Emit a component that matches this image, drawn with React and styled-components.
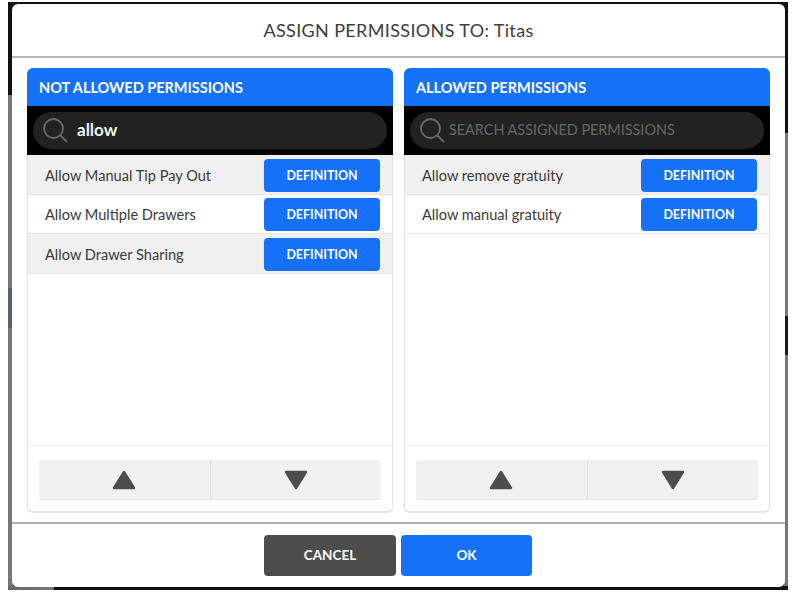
import React from 'react';
import styled, { createGlobalStyle } from 'styled-components';

const Global = createGlobalStyle`
  html, body { margin: 0; padding: 0; background: #fff; }
  body { font-family: "Lato", "Liberation Sans", sans-serif; }
  * { box-sizing: border-box; }
`;

const notAllowed = ['Allow Manual Tip Pay Out', 'Allow Multiple Drawers', 'Allow Drawer Sharing'];
const allowed = ['Allow remove gratuity', 'Allow manual gratuity'];

const SearchIcon = () => (
  <svg width="26" height="28" viewBox="0 0 26 28" fill="none" stroke="#6a6a6a" strokeWidth="1.8" strokeLinecap="round">
    <circle cx="10.5" cy="11.5" r="9.5" />
    <path d="M17.5 18.5 L23.5 24.5" />
  </svg>
);

const Arrow = ({ down }) => (
  <svg width="24" height="20" viewBox="0 0 24 20">
    <path
      d={down ? 'M2 2 H22 L12 18 Z' : 'M12 2 L22 18 H2 Z'}
      fill="#4d4d4d"
      stroke="#4d4d4d"
      strokeWidth="2.4"
      strokeLinejoin="round"
    />
  </svg>
);

const Panel = ({ title, query, placeholder, items }) => (
  <Card>
    <CardTitle>{title}</CardTitle>
    <SearchBar>
      <SearchPill>
        <SearchIcon />
        <SearchInput $filled={!!query} $indent={query ? 8 : 3}>{query || placeholder}</SearchInput>
      </SearchPill>
    </SearchBar>
    <CardBody>
      <List>
        {items.map((item) => (
          <Row key={item}>
            <RowLabel>{item}</RowLabel>
            <DefinitionButton>DEFINITION</DefinitionButton>
          </Row>
        ))}
      </List>
      <Pager>
        <PagerButton><Arrow /></PagerButton>
        <PagerButton><Arrow down /></PagerButton>
      </Pager>
    </CardBody>
  </Card>
);

const App = () => (
  <>
    <Global />
    <Backdrop>
      <Modal>
        <Header>ASSIGN PERMISSIONS TO: Titas</Header>
        <Body>
          <Panel title="NOT ALLOWED PERMISSIONS" query="allow" items={notAllowed} />
          <Panel title="ALLOWED PERMISSIONS" placeholder="SEARCH ASSIGNED PERMISSIONS" items={allowed} />
        </Body>
        <Footer>
          <FooterButton $dark>CANCEL</FooterButton>
          <FooterButton>OK</FooterButton>
        </Footer>
      </Modal>
    </Backdrop>
  </>
);

export default App;

const Backdrop = styled.div`
  width: 780px;
  height: 588px;
  margin: 2px 0 0 8px;
  padding: 2px 3px 3px 4px;
  background:
    linear-gradient(to right, #666 0, #777 46px, #111 46px) bottom left / 100% 4px no-repeat,
    linear-gradient(to bottom, #111 0, #111 131px, #777 131px, #777 314px, #1c1c1c 314px, #1c1c1c 353px, #777 353px) top right / 4px 100% no-repeat,
    linear-gradient(to bottom, #111 0, #111 93px, #777 93px, #777 286px, #5a6272 286px, #5a6272 326px, #777 326px) top left / 5px 100% no-repeat,
    #111;
`;

const Modal = styled.div`
  width: 773px;
  height: 583px;
  display: flex;
  flex-direction: column;
  background: #fff;
  border-radius: 6px;
`;

const Header = styled.div`
  height: 54px;
  flex: none;
  display: flex;
  align-items: center;
  justify-content: center;
  padding-bottom: 1px;
  border-bottom: 2px solid #b8b8b8;
  font-size: 18px;
  letter-spacing: 0.36px;
  color: #3d3d3d;
`;

const Body = styled.div`
  flex: 1;
  min-height: 0;
  display: flex;
  gap: 11px;
  padding: 10px 15px 9px;
`;

const Card = styled.section`
  flex: 1;
  min-width: 0;
  display: flex;
  flex-direction: column;
`;

const CardTitle = styled.div`
  height: 38px;
  flex: none;
  display: flex;
  align-items: center;
  padding-left: 12px;
  border-radius: 6px 6px 0 0;
  background: #1471f8;
  color: #fff;
  font-size: 14.5px;
  font-weight: 700;
`;

const SearchBar = styled.div`
  height: 49px;
  flex: none;
  padding: 6px;
  background: #000;
`;

const SearchPill = styled.div`
  height: 37px;
  display: flex;
  align-items: center;
  padding-left: 10px;
  border-radius: 19px;
  background: #222;
`;

const SearchInput = styled.span`
  margin-left: ${(p) => p.$indent}px;
  margin-top: -2px;
  font-size: ${(p) => (p.$filled ? 17 : 14.4)}px;
  font-weight: ${(p) => (p.$filled ? 700 : 400)};
  color: ${(p) => (p.$filled ? '#f2f2f2' : '#666')};
`;

const CardBody = styled.div`
  flex: 1;
  min-height: 0;
  display: flex;
  flex-direction: column;
  border: 1px solid #e2e2e2;
  border-top: none;
  border-bottom-width: 2px;
  border-radius: 0 0 6px 6px;
`;

const List = styled.div`
  flex: 1;
  min-height: 0;
  border-bottom: 1px solid #ececec;
`;

const Row = styled.div`
  height: 39.5px;
  display: flex;
  align-items: center;
  justify-content: space-between;
  padding: 2px 12px 0 17px;
  border-bottom: 1px solid #e6e6e6;
  &:nth-child(odd) { background: #f0f0f0; }
`;

const RowLabel = styled.span`
  font-size: 14.6px;
  color: #3a3a3a;
`;

const DefinitionButton = styled.button`
  width: 116px;
  height: 33px;
  padding: 0;
  border: none;
  border-radius: 4px;
  background: #1471f8;
  color: #fff;
  font-family: inherit;
  font-size: 12.4px;
  font-weight: 700;
`;

const Pager = styled.div`
  flex: none;
  height: 65px;
  display: flex;
  padding: 14px 11px 11px;
`;

const PagerButton = styled.button`
  flex: 1;
  padding: 0;
  border: none;
  border-bottom: 1px solid #e6e6e6;
  background: #f0f0f0;
  display: flex;
  align-items: center;
  justify-content: center;
  &:first-child { border-radius: 3px 0 0 3px; border-right: 1px solid #e0e0e0; }
  &:last-child { border-radius: 0 3px 3px 0; }
`;

const Footer = styled.div`
  flex: none;
  height: 65px;
  display: flex;
  justify-content: center;
  gap: 5px;
  padding: 11px 1px 0 0;
  border-top: 2px solid #b0b0b0;
`;

const FooterButton = styled.button`
  width: ${(p) => (p.$dark ? 132 : 131)}px;
  height: 41px;
  padding: 0 0 1px;
  border: none;
  border-radius: 4px;
  background: ${(p) => (p.$dark ? '#4d4d4d' : '#1471f8')};
  color: #fff;
  font-family: inherit;
  font-size: 13.5px;
  font-weight: 700;
`;
